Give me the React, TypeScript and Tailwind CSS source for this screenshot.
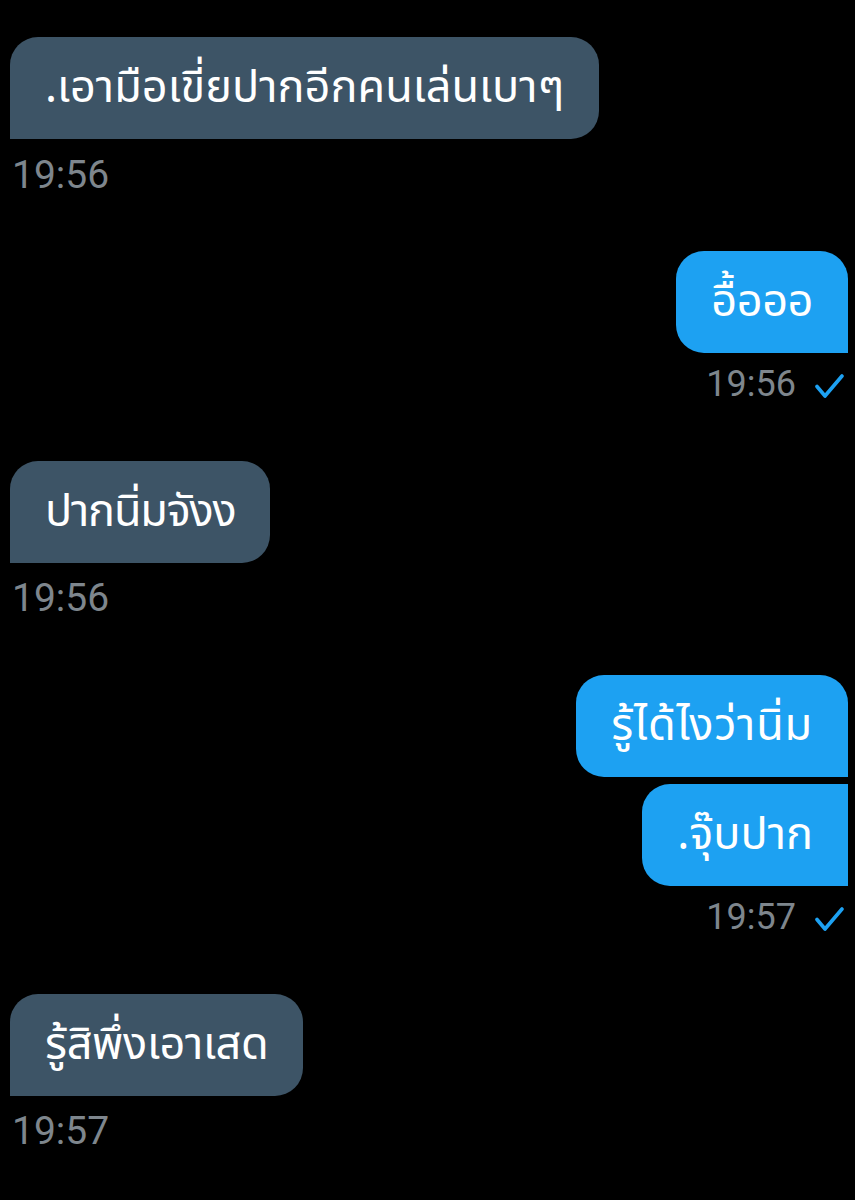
import React from "react";

const thai = { fontFamily: '"Noto Sans Thai", "Noto Sans", "DejaVu Sans", sans-serif' };
const roboto = { fontFamily: 'Roboto, "Liberation Sans", sans-serif' };

function Check() {
  return (
    <svg width="30" height="26" viewBox="0 0 30 26" className="ml-[18px] mt-[4px]">
      <path d="M3 13.5 L11 23 L28 3" fill="none" stroke="#1da1f2" strokeWidth="3.6" strokeLinecap="round" strokeLinejoin="round" />
    </svg>
  );
}

function LeftBubble({ text, className = "" }: { text: string; className?: string }) {
  return (
    <div className={`self-start h-[102px] flex items-center px-[35px] bg-[#3d5466] rounded-[28px] rounded-bl-none text-white text-[45px] leading-none ${className}`} style={thai}>
      {text}
    </div>
  );
}

function RightBubble({ text, className = "" }: { text: string; className?: string }) {
  return (
    <div className={`self-end h-[102px] flex items-center px-[35px] bg-[#1da1f2] text-white text-[45px] leading-none ${className}`} style={thai}>
      {text}
    </div>
  );
}

function LeftTime({ t, className = "" }: { t: string; className?: string }) {
  return (
    <div className={`self-start h-[40px] flex items-center pl-[2px] text-[39px] text-[#7e868d] leading-none ${className}`} style={roboto}>
      {t}
    </div>
  );
}

function RightTime({ t, className = "" }: { t: string; className?: string }) {
  return (
    <div className={`self-end h-[40px] flex items-center pr-[4px] text-[36px] text-[#7e868d] leading-none ${className}`} style={roboto}>
      <span>{t}</span>
      <Check />
    </div>
  );
}

export default function App() {
  return (
    <div className="w-[855px] h-[1200px] bg-black overflow-hidden flex flex-col pt-[37px] pl-[10px] pr-[7px]">
      <LeftBubble text=".เอามือเขี่ยปากอีกคนเล่นเบาๆ" className="tracking-[0.05px]" />
      <LeftTime t="19:56" className="mt-[16px]" />

      <RightBubble text="อื้อออ" className="mt-[56px] rounded-[28px] rounded-br-none tracking-[-0.4px]" />
      <RightTime t="19:56" className="mt-[11px]" />

      <LeftBubble text="ปากนิ่มจังง" className="mt-[57px] tracking-[-1.2px]" />
      <LeftTime t="19:56" className="mt-[15px]" />

      <RightBubble text="รู้ได้ไงว่านิ่ม" className="mt-[57px] rounded-[28px] rounded-br-none tracking-[0.8px]" />
      <RightBubble text=".จุ๊บปาก" className="mt-[7px] rounded-l-[28px]" />
      <RightTime t="19:57" className="mt-[11px]" />

      <LeftBubble text="รู้สิพึ่งเอาเสด" className="mt-[57px] tracking-[-0.3px]" />
      <LeftTime t="19:57" className="mt-[15px]" />
    </div>
  );
}
